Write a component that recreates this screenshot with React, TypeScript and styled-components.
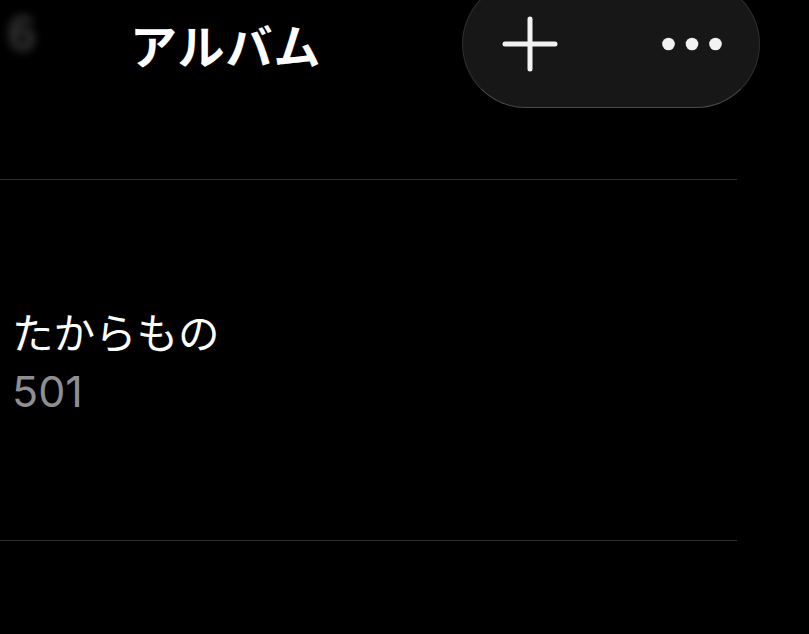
import styled, { createGlobalStyle } from "styled-components";

const GlobalStyle = createGlobalStyle`
  html, body {
    margin: 0;
    padding: 0;
    background: #000;
  }
  body {
    font-family: "Noto Sans CJK JP", "Noto Sans", sans-serif;
    color: #fff;
    overflow: hidden;
  }
`;

const Screen = styled.div`
  width: 809px;
  height: 634px;
  background: #000;
  overflow: hidden;
`;

const Header = styled.header`
  display: flex;
  align-items: flex-start;
  height: 108px;
`;

const BackGhost = styled.span`
  width: 36px;
  margin: 2px 0 0 8px;
  font-family: "Liberation Sans", sans-serif;
  font-size: 50px;
  font-weight: 700;
  line-height: 64px;
  color: #383838;
  filter: blur(5px);
`;

const Title = styled.h1`
  margin: 0 0 0 86px;
  font-size: 47px;
  font-weight: 700;
  line-height: 88px;
  letter-spacing: 1px;
`;

const Pill = styled.div`
  margin: -20px 49px 0 auto;
  width: 298px;
  height: 128px;
  box-sizing: border-box;
  border-radius: 64px;
  background: #171717;
  border: 1.5px solid rgba(255, 255, 255, 0.1);
  border-bottom-color: rgba(255, 255, 255, 0.22);
  display: flex;
  align-items: center;
  justify-content: space-between;
`;

const PillButton = styled.button`
  width: 134px;
  height: 100%;
  padding: 0;
  border: none;
  background: transparent;
  display: flex;
  align-items: center;
  justify-content: center;
  color: #f2f2f2;
  cursor: pointer;
`;

const Separator = styled.div`
  width: 737px;
  height: 1px;
  background: #2f2f2f;
`;

const List = styled.div`
  margin-top: 71px;
`;

const AlbumItem = styled.div`
  height: 360px;
  box-sizing: border-box;
  padding: 121px 0 0 12px;
`;

const AlbumName = styled.div`
  font-size: 41.5px;
  line-height: 60px;
  font-weight: 400;
  color: #fff;
`;

const AlbumCount = styled.div`
  font-family: Inter, "Noto Sans", sans-serif;
  font-size: 43px;
  line-height: 60px;
  color: #8e8e93;
`;

const PlusIcon = () => (
  <svg width="56" height="56" viewBox="0 0 56 56">
    <path d="M28 3v50M3 28h50" stroke="currentColor" strokeWidth="5" strokeLinecap="round" fill="none" />
  </svg>
);

const MoreIcon = () => (
  <svg width="60" height="16" viewBox="0 0 60 16">
    <circle cx="6.5" cy="8" r="6.3" fill="currentColor" />
    <circle cx="30" cy="8" r="6.3" fill="currentColor" />
    <circle cx="53.5" cy="8" r="6.3" fill="currentColor" />
  </svg>
);

export default function App() {
  return (
    <>
      <GlobalStyle />
      <Screen>
        <Header>
          <BackGhost>6</BackGhost>
          <Title>アルバム</Title>
          <Pill>
            <PillButton aria-label="追加">
              <PlusIcon />
            </PillButton>
            <PillButton aria-label="その他">
              <MoreIcon />
            </PillButton>
          </Pill>
        </Header>
        <List>
          <Separator />
          <AlbumItem>
            <AlbumName>たからもの</AlbumName>
            <AlbumCount>501</AlbumCount>
          </AlbumItem>
          <Separator />
        </List>
      </Screen>
    </>
  );
}
